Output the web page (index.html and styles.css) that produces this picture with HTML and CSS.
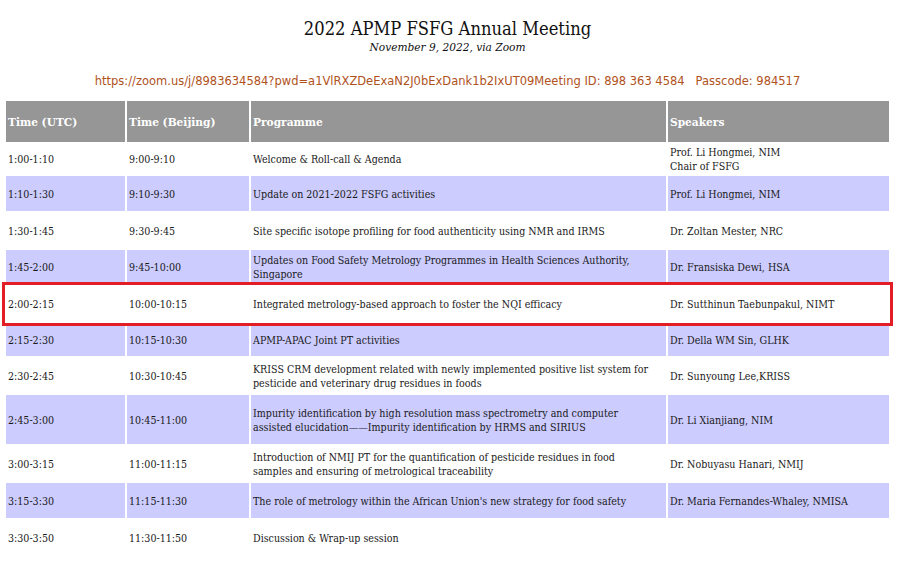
FILE: index.html
```html
<!DOCTYPE html>
<html>
<head>
<meta charset="utf-8">
<link rel="stylesheet" href="styles.css">
</head>
<body>
<div class="page">
  <h1 class="title">2022 APMP FSFG Annual Meeting</h1>
  <p class="subtitle">November 9, 2022, via Zoom</p>
  <p class="zoom">https://zoom.us/j/8983634584?pwd=a1VlRXZDeExaN2J0bExDank1b2IxUT09Meeting ID: 898 363 4584&nbsp;&nbsp; Passcode: 984517</p>
  <table class="agenda">
    <thead>
      <tr class="head">
        <th class="c1">Time (UTC)</th>
        <th class="c2">Time (Beijing)</th>
        <th class="c3">Programme</th>
        <th class="c4">Speakers</th>
      </tr>
    </thead>
    <tbody>
      <tr class="r-w h30"><td>1:00-1:10</td><td>9:00-9:10</td><td class="prog">Welcome &amp; Roll-call &amp; Agenda</td><td>Prof. Li Hongmei, NIM<br>Chair of FSFG</td></tr>
      <tr class="r-p h35"><td>1:10-1:30</td><td>9:10-9:30</td><td class="prog">Update on 2021-2022 FSFG activities</td><td>Prof. Li Hongmei, NIM</td></tr>
      <tr class="r-w h35"><td>1:30-1:45</td><td>9:30-9:45</td><td class="prog">Site specific isotope profiling for food authenticity using NMR and IRMS</td><td>Dr. Zoltan Mester, NRC</td></tr>
      <tr class="r-p h34"><td>1:45-2:00</td><td>9:45-10:00</td><td class="prog">Updates on Food Safety Metrology Programmes in Health Sciences Authority, Singapore</td><td>Dr. Fransiska Dewi, HSA</td></tr>
      <tr class="r-w h36 marked"><td>2:00-2:15</td><td>10:00-10:15</td><td class="prog">Integrated metrology-based approach to foster the NQI efficacy</td><td>Dr. Sutthinun Taebunpakul, NIMT</td></tr>
      <tr class="r-p h32"><td>2:15-2:30</td><td>10:15-10:30</td><td class="prog">APMP-APAC Joint PT activities</td><td>Dr. Della WM Sin, GLHK</td></tr>
      <tr class="r-w h35"><td>2:30-2:45</td><td>10:30-10:45</td><td class="prog">KRISS CRM development related with newly implemented positive list system for pesticide and veterinary drug residues in foods</td><td>Dr. Sunyoung Lee,KRISS</td></tr>
      <tr class="r-p h49"><td>2:45-3:00</td><td>10:45-11:00</td><td class="prog">Impurity identification by high resolution mass spectrometry and computer assisted elucidation——Impurity identification by HRMS and SIRIUS</td><td>Dr. Li Xianjiang, NIM</td></tr>
      <tr class="r-w h35"><td>3:00-3:15</td><td>11:00-11:15</td><td class="prog">Introduction of NMIJ PT for the quantification of pesticide residues in food samples and ensuring of metrological traceability</td><td>Dr. Nobuyasu Hanari, NMIJ</td></tr>
      <tr class="r-p h35"><td>3:15-3:30</td><td>11:15-11:30</td><td class="prog">The role of metrology within the African Union's new strategy for food safety</td><td>Dr. Maria Fernandes-Whaley, NMISA</td></tr>
      <tr class="r-w h35"><td>3:30-3:50</td><td>11:30-11:50</td><td class="prog">Discussion &amp; Wrap-up session</td><td></td></tr>
    </tbody>
  </table>
</div>
</body>
</html>
```
FILE: styles.css
```css
html, body {
  margin: 0;
  padding: 0;
  background: #ffffff;
}
.page {
  padding: 18px 0 0 4px;
  font-family: "DejaVu Serif", "Liberation Serif", serif;
  font-stretch: semi-condensed;
  color: #1a1a1a;
}
.title {
  margin: 0;
  width: 887px;
  text-align: center;
  font-weight: normal;
  font-size: 18.2px;
  line-height: 22px;
  color: #111;
}
.subtitle {
  margin: 0;
  width: 887px;
  text-align: center;
  font-style: italic;
  font-size: 11.8px;
  line-height: 14px;
  color: #111;
}
.zoom {
  margin: 19px 0 0 0;
  width: 887px;
  text-align: center;
  font-family: "DejaVu Sans", "Liberation Sans", sans-serif;
  font-stretch: normal;
  font-size: 11.5px;
  line-height: 16px;
  color: #b0521c;
}
.agenda {
  margin-top: 10px;
  width: 887px;
  border-collapse: separate;
  border-spacing: 2px;
  table-layout: fixed;
  font-size: 10.6px;
}
.agenda th,
.agenda td {
  box-sizing: border-box;
}
.c1 { width: 119px; }
.c2 { width: 122px; }
.c3 { width: 415px; }
.c4 { width: 221px; }
.agenda th {
  background: #969696;
  color: #ffffff;
  font-weight: bold;
  font-size: 11.8px;
  text-align: left;
  height: 41px;
  padding: 0 2px;
  vertical-align: middle;
}
.agenda td {
  padding: 0 2px;
  vertical-align: middle;
  line-height: 14px;
}
.agenda td.prog {
  padding-right: 13px;
}
.r-p td { background: #ccccff; }
.r-w td { background: #ffffff; }
.h30 td { height: 30px; }
.h32 td { height: 32px; }
.h34 td { height: 34px; }
.h35 td { height: 35px; }
.h36 td { height: 36px; }
.h49 td { height: 49px; }
.marked {
  outline: 3px solid #e31d26;
  outline-offset: 1px;
}
```
